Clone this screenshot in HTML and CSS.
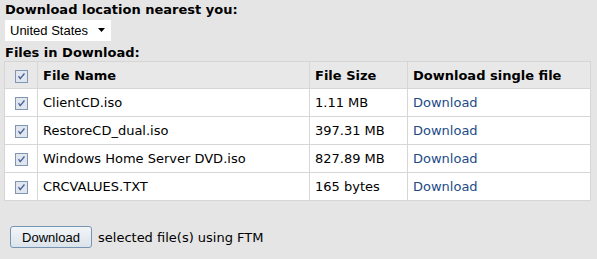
FILE: index.html
```html
<!DOCTYPE html>
<html lang="en">
<head>
    <meta charset="UTF-8">
    <title>Download</title>
    <link rel="stylesheet" href="styles.css">
</head>
<body>
    <div class="page">
        <h3 class="caption">Download location nearest you:</h3>
        <div class="select">
            <span>United States</span>
            <svg width="8" height="5" viewBox="0 0 8 5"><path d="M0 0h7L3.5 4z" fill="#000"/></svg>
        </div>
        <h3 class="caption">Files in Download:</h3>
        <table class="files">
            <thead>
                <tr>
                    <th class="check"><span class="box"></span></th>
                    <th class="name">File Name</th>
                    <th class="size">File Size</th>
                    <th>Download single file</th>
                </tr>
            </thead>
            <tbody>
                <tr>
                    <td class="check"><span class="box"></span></td>
                    <td>ClientCD.iso</td>
                    <td>1.11 MB</td>
                    <td><a href="#">Download</a></td>
                </tr>
                <tr>
                    <td class="check"><span class="box"></span></td>
                    <td>RestoreCD_dual.iso</td>
                    <td>397.31 MB</td>
                    <td><a href="#">Download</a></td>
                </tr>
                <tr>
                    <td class="check"><span class="box"></span></td>
                    <td>Windows Home Server DVD.iso</td>
                    <td>827.89 MB</td>
                    <td><a href="#">Download</a></td>
                </tr>
                <tr>
                    <td class="check"><span class="box"></span></td>
                    <td>CRCVALUES.TXT</td>
                    <td>165 bytes</td>
                    <td><a href="#">Download</a></td>
                </tr>
            </tbody>
        </table>
        <div class="actions">
            <button type="button">Download</button>
            <span>selected file(s) using FTM</span>
        </div>
    </div>
</body>
</html>
```

FILE: styles.css
```css
* {
    margin: 0;
    padding: 0;
    box-sizing: border-box;
}
body {
    background: #e5e5e5;
    font-family: 'DejaVu Sans', Verdana, sans-serif;
    font-size: 13px;
    color: #000;
}
.page {
    padding: 2px 4px 0 4px;
}
.caption {
    font-size: 13px;
    font-weight: bold;
    line-height: 16px;
    padding-left: 1px;
}
.select {
    display: inline-flex;
    align-items: center;
    gap: 10px;
    width: 106px;
    height: 21px;
    margin: 2px 0 4px 1px;
    padding: 0 4px 0 5px;
    background: #fff;
    font-family: 'Liberation Sans', Arial, sans-serif;
    font-size: 13px;
    white-space: nowrap;
}
.files {
    width: 587px;
    border-collapse: collapse;
    border: 1px solid #8a8a8a;
    background: #fff;
}
.files th,
.files td {
    height: 28px;
    border: 1px solid #d6d6d6;
    text-align: left;
    padding: 0 5px;
    font-weight: normal;
}
.files th {
    height: 27px;
    background: #e8e8e8;
    font-weight: bold;
}
.files .check {
    width: 33px;
    padding: 0;
    text-align: center;
}
.files .name {
    width: 272px;
}
.files .size {
    width: 98px;
}
.box {
    display: inline-block;
    width: 13px;
    height: 13px;
    border: 1px solid #8096b0;
    background: #dfe6ee url("data:image/svg+xml,%3Csvg xmlns='http://www.w3.org/2000/svg' viewBox='0 0 13 13'%3E%3Cpath d='M3 6l2 3l5-6' stroke='%234a5fa0' stroke-width='1.6' fill='none'/%3E%3C/svg%3E") center/11px no-repeat;
    vertical-align: middle;
}
.files a {
    color: #1d4b87;
    text-decoration: none;
}
.actions {
    display: flex;
    align-items: center;
    gap: 6px;
    margin: 25px 0 0 6px;
}
.actions button {
    width: 82px;
    height: 22px;
    border: 1px solid #7595b3;
    border-radius: 3px;
    background: linear-gradient(#f2f5f8, #dbe3ea);
    font-family: 'Liberation Sans', Arial, sans-serif;
    font-size: 13px;
    color: #000;
}
```
